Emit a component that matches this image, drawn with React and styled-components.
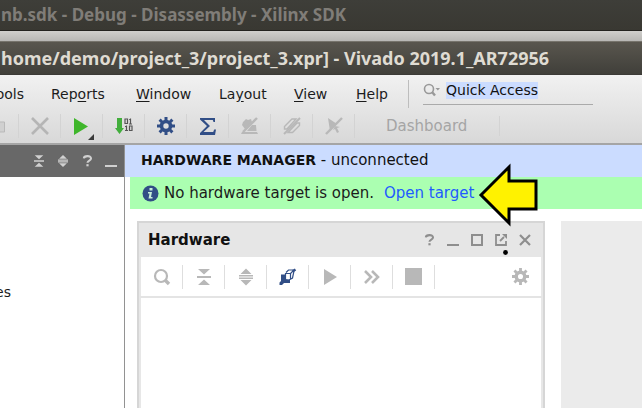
import React from 'react';
import styled, { createGlobalStyle } from 'styled-components';

const GlobalStyle = createGlobalStyle`
  * { box-sizing: border-box; }
  body {
    margin: 0;
    background: #fff;
    color: #1c1c1c;
    font: 15px/20px "DejaVu Sans", sans-serif;
    overflow: hidden;
  }
  button, input { font: inherit; color: inherit; }
`;

const Desktop = styled.div`
  display: flex;
  flex-direction: column;
  height: 100vh;
  background: #c5c4c2;
`;

const TitleBar = styled.header`
  display: flex;
  align-items: center;
  flex: none;
  height: ${p => (p.$active ? '34px' : '31px')};
  padding: 0 1px 0;
  color: ${p => (p.$active ? '#dfdbd2' : '#807d78')};
  background: ${p => (p.$active
    ? 'linear-gradient(#59564e, #403f3a)'
    : 'linear-gradient(#3e3e39, #393832)')};
  border-top: ${p => (p.$active ? '1px solid #77746c' : 'none')};
  border-bottom: 1px solid ${p => (p.$active ? '#3b3a36' : '#24231f')};
  font: 700 ${p => (p.$active ? '18px' : '17px')}/24px "Noto Sans", "Open Sans", sans-serif;
  white-space: nowrap;
`;

const BackWindow = styled.div`
  height: 41px;
  flex: none;
  background: linear-gradient(#d0cfcc 31px, #b8b7b4);
`;

const AppWindow = styled.div`
  display: flex;
  flex-direction: column;
  flex: 1;
  min-height: 0;
`;

const Chrome = styled.div`
  flex: none;
  background: linear-gradient(#f1f1f1, #d8d8d8);
  border-bottom: 2px solid #a5a5a5;
`;

const MenuBar = styled.nav`
  display: grid;
  grid-template-columns: 51px 85px 83px 75px 62px 52px 15px 170px;
  height: 33px;
  align-items: center;
  font-size: 14px;
`;

const MenuButton = styled.button`
  display: flex;
  justify-content: ${p => (p.$clipped ? 'flex-end' : 'flex-start')};
  width: ${p => (p.$clipped ? '24px' : 'auto')};
  padding: 4px 0 0;
  border: 0;
  background: none;
  text-align: left;
  white-space: nowrap;
  u { text-underline-offset: 2px; }
`;

const MenuDivider = styled.span`
  align-self: end;
  height: 28px;
  border-left: 1px solid #bdbdbd;
`;

const SearchField = styled.label`
  display: flex;
  align-items: center;
  gap: 6px;
  height: 27px;
  padding-bottom: 2px;
  border-bottom: 1px solid #aaa;
`;

const SearchInput = styled.input`
  width: 92px;
  height: 17px;
  padding: 0;
  border: 0;
  outline: 0;
  background: #cbdcff;
  color: #111;
  font-size: 14px;
`;

const MainTools = styled.div`
  display: flex;
  align-items: center;
  height: 35px;
`;

const ToolButton = styled.button`
  display: flex;
  align-items: center;
  justify-content: ${p => (p.$edge ? 'flex-start' : 'center')};
  flex: none;
  width: ${p => (p.$edge ? '19px' : '42px')};
  height: 24px;
  padding: 0;
  border: 0;
  border-right: 1px solid ${p => p.$line || '#d3d3d3'};
  background: none;
  color: ${p => p.$tint || 'inherit'};
  svg { display: block; flex: none; }
`;

const DashboardButton = styled.button`
  width: 145px;
  height: 20px;
  padding: 0 0 0 31px;
  border: 0;
  border-right: 1px solid #d3d3d3;
  background: none;
  color: #a5a5a5;
  text-align: left;
  line-height: 20px;
`;

const Workspace = styled.div`
  display: flex;
  flex: 1;
  min-height: 0;
  background: #fff;
`;

const Navigator = styled.aside`
  flex: none;
  width: 125px;
  border-right: 1px solid #929292;
`;

const NavigatorHead = styled.div`
  display: flex;
  align-items: center;
  justify-content: flex-end;
  height: 32px;
  padding-right: 1px;
  background: #686868;
  color: #d0d0d0;
`;

const IconButton = styled.button`
  display: flex;
  align-items: center;
  justify-content: center;
  width: 24px;
  height: 24px;
  padding: 0;
  border: 0;
  background: none;
  svg { display: block; }
`;

const NavigatorItem = styled.a`
  display: flex;
  justify-content: flex-end;
  width: 11px;
  margin-top: 105px;
  color: #1c1c1c;
  font-size: 14px;
  text-decoration: none;
`;

const Manager = styled.main`
  display: flex;
  flex-direction: column;
  flex: 1;
  min-width: 0;
`;

const ManagerTitle = styled.h1`
  flex: none;
  height: 32px;
  margin: 0;
  padding: 0 16px;
  background: #cbdcff;
  color: #111;
  font-size: 15px;
  font-weight: 400;
  line-height: 30px;
  white-space: nowrap;
  b { font-size: 14px; }
`;

const Notice = styled.div`
  display: flex;
  align-items: center;
  flex: none;
  height: 32px;
  margin-left: 5px;
  padding-left: 12px;
  background: #abffb1;
  white-space: nowrap;
  svg { display: block; }
`;

const NoticeText = styled.span`
  margin: 0 10px 0 5px;
`;

const TargetLink = styled.a`
  position: relative;
  color: #1f5bff;
  text-decoration: none;
`;

const Pointer = styled.svg`
  position: absolute;
  left: calc(100% + 4px);
  top: -20px;
`;

const Panels = styled.div`
  display: flex;
  gap: 16px;
  flex: 1;
  min-height: 0;
  padding: 12px 0 0 12px;
`;

const HardwarePanel = styled.section`
  flex: 0 0 408px;
  border: 2px solid #d6d6d6;
  border-bottom: 0;
  box-shadow: inset 2px 0 #e7e7e7, inset -2px 0 #e7e7e7;
`;

const PanelHead = styled.div`
  display: flex;
  align-items: center;
  height: 34px;
  padding: 0 6px 0 9px;
  background: #e6e6e6;
  color: #8e8e8e;
`;

const PanelTitle = styled.h2`
  flex: 1;
  margin: 0;
  color: #111;
  font-size: 15px;
  line-height: 20px;
`;

const PanelTools = styled.div`
  display: flex;
  align-items: center;
  height: 41px;
  padding: 0 10px 0 1px;
  margin: 0 1px;
  border-bottom: 2px solid #e4e4e4;
  color: #b8b8b8;
`;

const Spacer = styled.span`
  flex: 1;
`;

const SidePanel = styled.section`
  flex: 1;
  background: #ebebeb;
`;

function Gear({ size = 18 }) {
  return (
    <svg width={size} height={size} viewBox="0 0 18 18" fill="none" stroke="currentColor">
      <circle cx="9" cy="9" r="4.5" strokeWidth="3.6" />
      <path d="M9 0v4M9 14v4M0 9h4M14 9h4M2.6 2.6l2.6 2.6M12.8 12.8l2.6 2.6M2.6 15.4l2.6-2.6M12.8 5.2l2.6-2.6" strokeWidth="3" />
    </svg>
  );
}

function Collapse({ size = 14 }) {
  return (
    <svg width={size} height={size === 14 ? 18 : 14} viewBox="0 0 14 18" fill="currentColor">
      <path d="M1 1h12L7 6.500zM0 8h14v2H0zM1 17h12L7 11.500z" />
    </svg>
  );
}

function Expand({ size = 14 }) {
  return (
    <svg width={size} height={size === 14 ? 18 : 14} viewBox="0 0 14 18" fill="currentColor">
      <path d="M1.500 6h11L7 .5zM0 7h14v1.500H0zM0 9.500h14V11H0zM1.500 12h11L7 17.500z" />
    </svg>
  );
}

function Search() {
  return (
    <svg width="18" height="18" viewBox="0 0 18 18" fill="none" stroke="currentColor">
      <circle cx="8" cy="8" r="6" strokeWidth="2.200" />
      <path d="m12 12 4 4" strokeWidth="3.400" />
    </svg>
  );
}

function Minimize() {
  return (
    <svg width="12" height="14" viewBox="0 0 12 14">
      <path d="M0 11h12v2H0z" fill="currentColor" />
    </svg>
  );
}

function Help() {
  return (
    <svg width="11" height="12" viewBox="0 0 11 14">
      <path d="M1.200 4C1.500.6 9.600.2 9.600 4c0 2.600-4.100 2.300-4.100 5" fill="none" stroke="currentColor" strokeWidth="2.400" />
      <path d="M4.200 10.700h2.600v2.500H4.200z" fill="currentColor" />
    </svg>
  );
}

export default function App() {
  return (
    <>
      <GlobalStyle />
      <Desktop>
        <BackWindow>
          <TitleBar>nb.sdk - Debug - Disassembly - Xilinx SDK</TitleBar>
        </BackWindow>
        <AppWindow>
          <TitleBar $active>home/demo/project_3/project_3.xpr] - Vivado 2019.1_AR72956</TitleBar>
          <Chrome>
            <MenuBar>
              <MenuButton $clipped>ools</MenuButton>
              <MenuButton><span>Rep<u>o</u>rts</span></MenuButton>
              <MenuButton><span><u>W</u>indow</span></MenuButton>
              <MenuButton><span>La<u>y</u>out</span></MenuButton>
              <MenuButton><span><u>V</u>iew</span></MenuButton>
              <MenuButton><span><u>H</u>elp</span></MenuButton>
              <MenuDivider />
              <SearchField>
                <svg width="17" height="14" viewBox="0 0 17 14" fill="none" stroke="#999">
                  <circle cx="6" cy="6" r="4.500" strokeWidth="1.600" />
                  <path d="m9 9 3 3.500" strokeWidth="2.400" />
                  <path d="M12.500 5h4.500l-2.200 2.500z" fill="#999" stroke="none" />
                </svg>
                <SearchInput aria-label="Search" defaultValue="Quick Access" />
              </SearchField>
            </MenuBar>
            <MainTools>
              <ToolButton $edge aria-label="Copy">
                <svg width="6" height="14" viewBox="0 0 6 14">
                  <path d="M0 3h4.500v10H0" fill="#d0d0d0" stroke="#b9b9b9" />
                </svg>
              </ToolButton>
              <ToolButton aria-label="Delete">
                <svg width="18" height="18" viewBox="0 0 18 18" stroke="#b5b5b5" strokeWidth="2.600">
                  <path d="m1 1 16 16M17 1 1 17" />
                </svg>
              </ToolButton>
              <ToolButton aria-label="Run">
                <svg width="30" height="30" viewBox="0 0 30 30">
                  <path d="M7 7v17l14-8.500z" fill="#3fb62b" />
                  <path d="M27 23v6h-6z" fill="#3a3a3a" />
                </svg>
              </ToolButton>
              <ToolButton aria-label="Generate bitstream">
                <svg width="18" height="18" viewBox="0 0 18 18">
                  <path d="M2 1h5v10h2L4.500 17 0 11h2z" fill="#42ae3c" />
                  <g fill="none" stroke="#555" strokeWidth="1.200">
                    <path d="M10 2h2.500v4.500H10zM15.500 1.400v5.600M14.200 2.500h1.300M14 7h3M11.500 8.500v5M10 9.500h1.500M10 13.500h3M14.500 9h2.500v4.500h-2.500z" />
                  </g>
                </svg>
              </ToolButton>
              <ToolButton aria-label="Settings" $tint="#314e86">
                <Gear />
              </ToolButton>
              <ToolButton aria-label="Report">
                <svg width="18" height="18" viewBox="0 0 18 18">
                  <path d="M1 1h15v4h-1.500l-.7-2H5l6 6-6.500 6h9.700l1-2.500H17L16 18H1v-2l7-7-7-6.500z" fill="#314e86" />
                </svg>
              </ToolButton>
              <ToolButton aria-label="Synthesize">
                <svg width="18" height="18" viewBox="0 0 18 18" fill="#b8b8b8">
                  <path d="M2 5 5 2l2 1 3-1 1 3-7 7-3-4zM11 8l4 0 .5 6H6zM1 15h15l1 2H0z" />
                  <path d="M2 15 16 1" stroke="#b8b8b8" strokeWidth="2.400" />
                </svg>
              </ToolButton>
              <ToolButton aria-label="Implement">
                <svg width="18" height="18" viewBox="0 0 18 18" fill="none" stroke="#b8b8b8">
                  <path d="M1.500 9.500 9 2h4l-9 10H1.500zM5 15.500 14 6h2.500v2.500l-7 7z" strokeWidth="1.400" />
                  <path d="M1 17 17 1" strokeWidth="2" />
                </svg>
              </ToolButton>
              <ToolButton aria-label="Select">
                <svg width="18" height="18" viewBox="0 0 18 18">
                  <path d="m3 1 9 6-7 7zM10 9l5 1-3 1 2 4-2 1-2-4-2 1z" fill="#b8b8b8" />
                  <path d="M1 17 17 1" stroke="#b8b8b8" strokeWidth="2.400" />
                </svg>
              </ToolButton>
              <DashboardButton>Dashboard</DashboardButton>
            </MainTools>
          </Chrome>
          <Workspace>
            <Navigator>
              <NavigatorHead>
                <IconButton aria-label="Collapse all"><Collapse size={10} /></IconButton>
                <IconButton aria-label="Expand all"><Expand size={10} /></IconButton>
                <IconButton aria-label="Help"><Help /></IconButton>
                <IconButton aria-label="Minimize"><Minimize /></IconButton>
              </NavigatorHead>
              <NavigatorItem href="#sources">es</NavigatorItem>
            </Navigator>
            <Manager>
              <ManagerTitle><b>HARDWARE MANAGER</b> - unconnected</ManagerTitle>
              <Notice>
                <svg width="17" height="17" viewBox="0 0 17 17">
                  <circle cx="8.500" cy="8.500" r="8" fill="#314e86" />
                  <path d="M7.500 3h3v2.500h-3zM6 7h4l-1 5h1.500v1.500h-4L7.500 8.500H6z" fill="#c9efd9" />
                </svg>
                <NoticeText>No hardware target is open.</NoticeText>
                <TargetLink href="#open-target">
                  Open target
                  <Pointer width="62" height="64" viewBox="0 0 62 64" aria-hidden="true">
                    <path d="M3 32 31 4v14h27v28H31v14z" fill="#fff200" stroke="#000" strokeWidth="3" />
                  </Pointer>
                </TargetLink>
              </Notice>
              <Panels>
                <HardwarePanel>
                  <PanelHead>
                    <PanelTitle>Hardware</PanelTitle>
                    <IconButton aria-label="Help"><Help /></IconButton>
                    <IconButton aria-label="Minimize"><Minimize /></IconButton>
                    <IconButton aria-label="Maximize">
                      <svg width="12" height="12"><path d="M1 1h10v10H1z" fill="none" stroke="currentColor" strokeWidth="2" /></svg>
                    </IconButton>
                    <IconButton aria-label="Float">
                      <svg width="14" height="30" viewBox="0 0 14 30">
                        <path d="M6 10H2v10h10v-4M6 16l4-4" fill="none" stroke="currentColor" strokeWidth="1.800" />
                        <path d="M8 9h5v5z" fill="currentColor" />
                        <circle cx="11.500" cy="27.500" r="2.400" fill="#000" />
                      </svg>
                    </IconButton>
                    <IconButton aria-label="Close">
                      <svg width="12" height="12"><path d="m1 1 10 10M11 1 1 11" stroke="currentColor" strokeWidth="2.200" /></svg>
                    </IconButton>
                  </PanelHead>
                  <PanelTools>
                    <ToolButton aria-label="Search" $line="#dedede"><Search /></ToolButton>
                    <ToolButton aria-label="Collapse all" $line="#dedede"><Collapse /></ToolButton>
                    <ToolButton aria-label="Expand all" $line="#dedede"><Expand /></ToolButton>
                    <ToolButton aria-label="Auto connect" $line="#dedede">
                      <svg width="18" height="18" viewBox="0 0 18 18" fill="none" stroke="#314e86">
                        <path d="M7 4.500 9.500 2H14l1 1-1.500 7L10 12H6.500V5.500h5V11M11.500 5.500 14 3" strokeWidth="1.200" />
                        <path d="m14 3 2.500-1.500" strokeWidth="2.600" />
                        <path d="M2 6.500h4V11l5 1v3H5l-2 2H.5v-2.500L2 13z" fill="#314e86" stroke="none" />
                      </svg>
                    </ToolButton>
                    <ToolButton aria-label="Run" $line="#dedede">
                      <svg width="14" height="16"><path d="M1 0v16l13-8z" fill="currentColor" /></svg>
                    </ToolButton>
                    <ToolButton aria-label="Run immediate" $line="#dedede">
                      <svg width="18" height="16" viewBox="0 0 18 16"><path d="m2 2 6 6-6 6M9 2l6 6-6 6" fill="none" stroke="currentColor" strokeWidth="2.600" /></svg>
                    </ToolButton>
                    <ToolButton aria-label="Stop" $line="#dedede">
                      <svg width="17" height="17"><path d="M0 0h17v17H0z" fill="currentColor" /></svg>
                    </ToolButton>
                    <Spacer />
                    <IconButton aria-label="Panel settings"><Gear size={17} /></IconButton>
                  </PanelTools>
                </HardwarePanel>
                <SidePanel />
              </Panels>
            </Manager>
          </Workspace>
        </AppWindow>
      </Desktop>
    </>
  );
}
